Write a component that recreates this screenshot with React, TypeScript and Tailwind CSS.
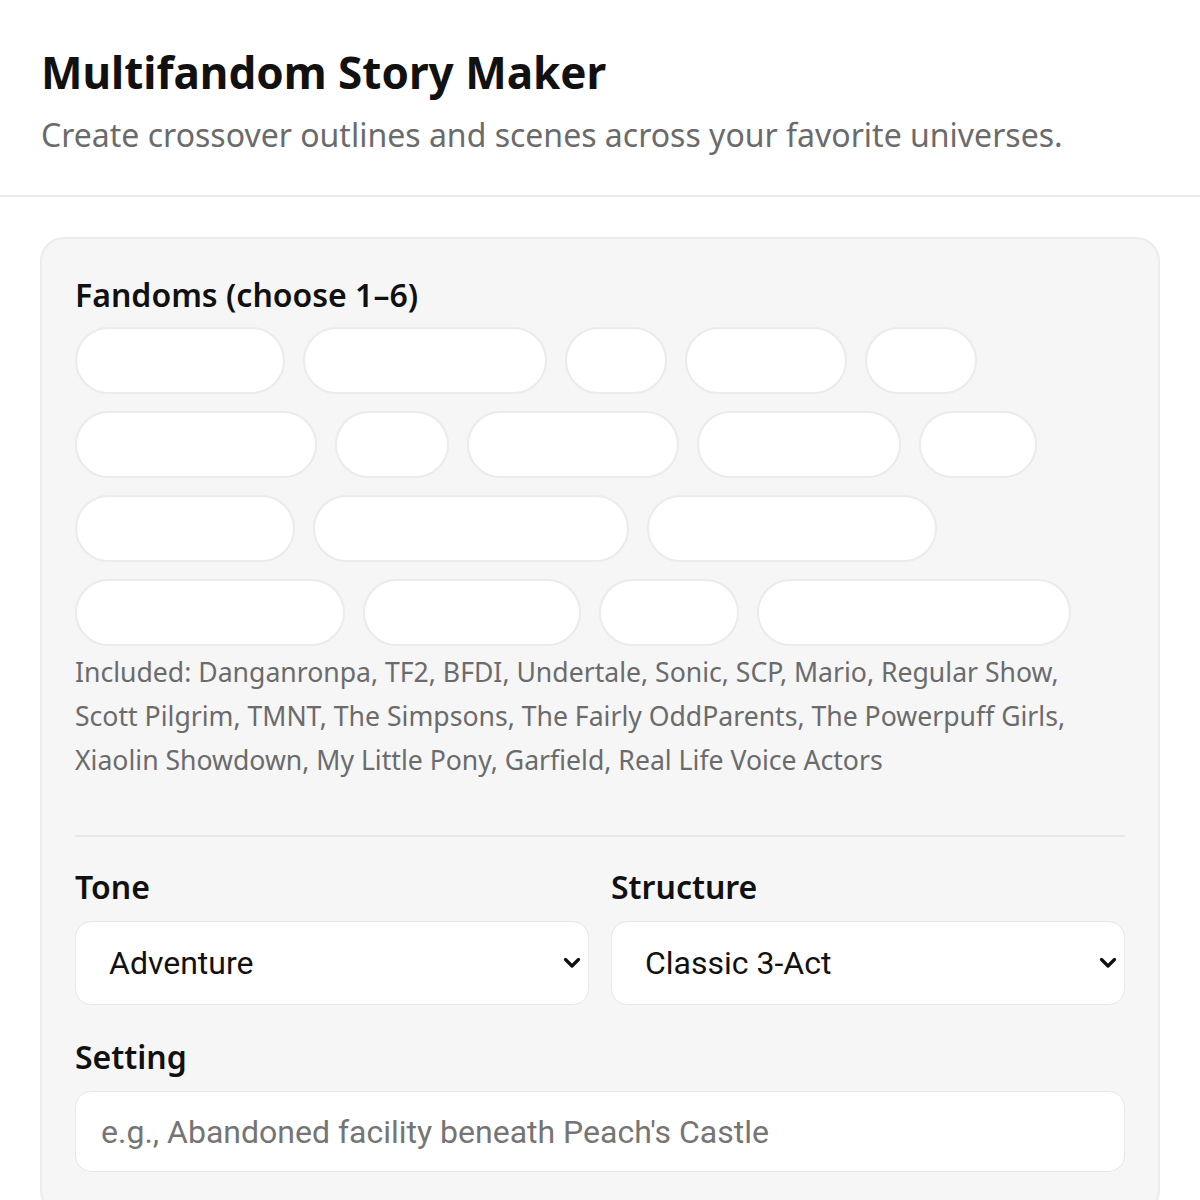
const chipRows: number[][] = [
  [210, 244, 102, 162, 112],
  [242, 114, 212, 204, 118],
  [220, 316, 290],
  [270, 218, 140, 314],
];

const included =
  "Included: Danganronpa, TF2, BFDI, Undertale, Sonic, SCP, Mario, Regular Show, Scott Pilgrim, TMNT, The Simpsons, The Fairly OddParents, The Powerpuff Girls, Xiaolin Showdown, My Little Pony, Garfield, Real Life Voice Actors";

function Chevron() {
  return (
    <svg
      className="pointer-events-none absolute right-[6px] top-1/2 -translate-y-1/2"
      width="22"
      height="20"
      viewBox="0 0 22 20"
      fill="none"
    >
      <path
        d="M4.5 6.5 11 13l6.5-6.5"
        stroke="#111"
        strokeWidth="3.2"
        strokeLinecap="round"
        strokeLinejoin="round"
      />
    </svg>
  );
}

function SelectField({ label, value }: { label: string; value: string }) {
  return (
    <div className="flex flex-col">
      <label className="mb-[14px] text-[32px] font-semibold leading-[40px] text-[#111]">
        {label}
      </label>
      <div className="relative">
        <select
          defaultValue={value}
          className="h-[84px] w-full appearance-none rounded-[16px] border border-[#e6e6e6] bg-white pl-[33px] pr-[40px] font-['Roboto',sans-serif] text-[32px] text-[#111] outline-none"
        >
          <option>{value}</option>
        </select>
        <Chevron />
      </div>
    </div>
  );
}

export default function App() {
  return (
    <div className="min-h-[1200px] bg-white font-['Noto_Sans',sans-serif]">
      <header className="border-b-2 border-[#ebebeb] px-[41px] pb-[38px] pt-[42px]">
        <h1 className="text-[44px] font-bold leading-[60px] text-[#111]">
          Multifandom Story Maker
        </h1>
        <p className="mt-[11px] text-[32px] leading-[44px] text-[#6b6b6b]">
          Create crossover outlines and scenes across your favorite universes.
        </p>
      </header>

      <main className="px-[40px] pt-[40px]">
        <section className="rounded-[24px] border-2 border-[#ececec] bg-[#f6f6f6] px-[33px] pb-[40px] pt-[34px]">
          <h2 className="mb-[10px] text-[32px] font-semibold leading-[44px] text-[#111]">
            Fandoms (choose 1–6)
          </h2>
          <div className="flex flex-col gap-[17px]">
            {chipRows.map((row, i) => (
              <div key={i} className="flex gap-[18px]">
                {row.map((w, j) => (
                  <button
                    key={j}
                    className="h-[67px] rounded-full border-2 border-[#ebebeb] bg-white"
                    style={{ width: w }}
                  />
                ))}
              </div>
            ))}
          </div>
          <p className="mt-[4px] text-[26.6px] leading-[44px] text-[#6b6b6b]">
            {included}
          </p>

          <div className="mt-[53px] border-t-2 border-[#e8e8e8]" />

          <div className="mt-[30px] grid grid-cols-2 gap-[22px]">
            <SelectField label="Tone" value="Adventure" />
            <SelectField label="Structure" value="Classic 3-Act" />
          </div>

          <div className="mt-[32px] flex flex-col">
            <label className="mb-[14px] text-[32px] font-semibold leading-[40px] text-[#111]">
              Setting
            </label>
            <input
              placeholder="e.g., Abandoned facility beneath Peach's Castle"
              className="h-[81px] w-full rounded-[16px] border border-[#e6e6e6] bg-white px-[25px] font-['Roboto',sans-serif] text-[32px] text-[#111] outline-none placeholder:text-[#757575]"
            />
          </div>
        </section>
      </main>
    </div>
  );
}
